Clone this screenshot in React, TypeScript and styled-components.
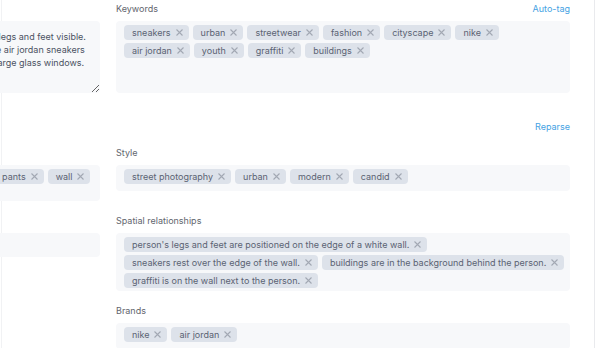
import styled, { createGlobalStyle } from "styled-components";

const GlobalStyle = createGlobalStyle`
  body {
    margin: 0;
    background: #ffffff;
    font-family: Inter, "Noto Sans", sans-serif;
  }
`;

const Viewport = styled.div`
  width: 600px;
  height: 348px;
  overflow: hidden;
  background: #ffffff;
`;

const Panel = styled.div`
  box-sizing: border-box;
  width: 594px;
  min-height: 348px;
  margin-left: 1px;
  padding-top: 3px;
  border-left: 1px solid #f1f2f4;
  border-right: 1px solid #e9eaed;
`;

const Grid = styled.div`
  display: grid;
  grid-template-columns: 290px 454px;
  column-gap: 16px;
  row-gap: 14px;
  margin-left: -192px;
  align-items: start;
`;

const Field = styled.div`
  display: flex;
  flex-direction: column;
  gap: 6px;
`;

const Header = styled.div`
  display: flex;
  justify-content: space-between;
  align-items: center;
  height: 12px;
`;

const Label = styled.span`
  font-size: 9px;
  line-height: 12px;
  color: #62666e;
`;

const Action = styled.span`
  font-size: 9px;
  line-height: 12px;
  color: #45a2e3;
  cursor: pointer;
`;

const ActionRow = styled(Header)`
  grid-column: 2;
  justify-content: flex-end;
  margin-top: 14px;
`;

const Description = styled.textarea`
  box-sizing: border-box;
  width: 100%;
  height: 72px;
  margin: 0;
  padding: 9px 10px;
  border: none;
  border-radius: 4px;
  background: #f7f8fa;
  font-family: Inter, "Noto Sans", sans-serif;
  font-size: 9px;
  line-height: 13px;
  color: #4b5262;
  white-space: pre;
  overflow: hidden;
  resize: vertical;
  outline: none;
`;

const TagBox = styled.div<{ $minHeight?: number }>`
  box-sizing: border-box;
  display: flex;
  flex-wrap: wrap;
  align-content: flex-start;
  gap: 3px 4px;
  min-height: ${(p) => p.$minHeight ?? 26}px;
  padding: 4px 5px 3px 8px;
  border-radius: 4px;
  background: #f7f8fa;
`;

const Tag = styled.span`
  display: inline-flex;
  align-items: center;
  gap: 5px;
  height: 15px;
  padding: 0 6px 0 8px;
  border-radius: 4px;
  background: #dde2ea;
  font-size: 9px;
  color: #5b6373;
  white-space: nowrap;
`;

const Remove = () => (
  <svg width="7" height="7" viewBox="0 0 7 7">
    <path d="M0.5 0.5 L6.5 6.5 M6.5 0.5 L0.5 6.5" stroke="#a2a8b3" strokeWidth="1.1" />
  </svg>
);

const Tags = ({ items, minHeight }: { items: string[]; minHeight?: number }) => (
  <TagBox $minHeight={minHeight}>
    {items.map((t) => (
      <Tag key={t}>
        {t}
        <Remove />
      </Tag>
    ))}
  </TagBox>
);

const description =
  "A person sitting on a ledge with only their legs and feet visible.\n" +
  "They are wearing black pants and all white air jordan sneakers\n" +
  "Behind them is graffiti and buildings with large glass windows.";

const keywords = [
  "sneakers",
  "urban",
  "streetwear",
  "fashion",
  "cityscape",
  "nike",
  "air jordan",
  "youth",
  "graffiti",
  "buildings",
];

const objects = ["person", "sneaker", "jeans", "pants", "wall"];
const style = ["street photography", "urban", "modern", "candid"];
const spatial = [
  "person's legs and feet are positioned on the edge of a white wall.",
  "sneakers rest over the edge of the wall.",
  "buildings are in the background behind the person.",
  "graffiti is on the wall next to the person.",
];
const brands = ["nike", "air jordan"];

const App = () => {
  return (
    <Viewport>
      <GlobalStyle />
      <Panel>
        <Grid>
          <Field>
            <Header>
              <Label>Description</Label>
            </Header>
            <Description wrap="off" defaultValue={description} />
          </Field>
          <Field>
            <Header>
              <Label>Keywords</Label>
              <Action>Auto-tag</Action>
            </Header>
            <Tags items={keywords} minHeight={72} />
          </Field>

          <ActionRow>
            <Action>Reparse</Action>
          </ActionRow>

          <Field>
            <Header>
              <Label>Objects</Label>
            </Header>
            <Tags items={objects} minHeight={36} />
          </Field>
          <Field>
            <Header>
              <Label>Style</Label>
            </Header>
            <Tags items={style} />
          </Field>

          <Field>
            <Header>
              <Label>Colors</Label>
            </Header>
            <TagBox $minHeight={24} />
          </Field>
          <Field>
            <Header>
              <Label>Spatial relationships</Label>
            </Header>
            <Tags items={spatial} />
          </Field>

          <div />
          <Field>
            <Header>
              <Label>Brands</Label>
            </Header>
            <Tags items={brands} />
          </Field>
        </Grid>
      </Panel>
    </Viewport>
  );
};

export default App;
